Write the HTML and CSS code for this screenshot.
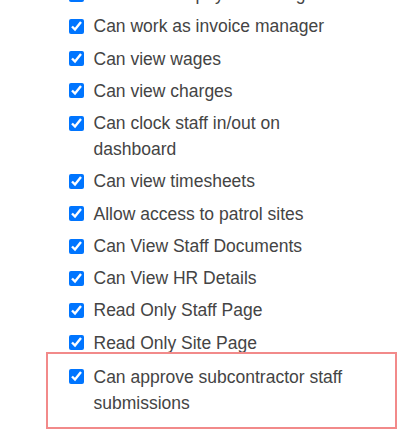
FILE: index.html
```html
<!DOCTYPE html>
<html lang="en">
<head>
<meta charset="utf-8">
<title>Permissions</title>
<link rel="stylesheet" href="styles.css">
</head>
<body>
<ul class="perm-list">
  <li class="perm"><input type="checkbox" class="perm-check" checked><span class="perm-text">Can work as payroll manager</span></li>
  <li class="perm"><input type="checkbox" class="perm-check" checked><span class="perm-text">Can work as invoice manager</span></li>
  <li class="perm"><input type="checkbox" class="perm-check" checked><span class="perm-text">Can view wages</span></li>
  <li class="perm"><input type="checkbox" class="perm-check" checked><span class="perm-text">Can view charges</span></li>
  <li class="perm"><input type="checkbox" class="perm-check" checked><span class="perm-text">Can clock staff in/out on dashboard</span></li>
  <li class="perm"><input type="checkbox" class="perm-check" checked><span class="perm-text">Can view timesheets</span></li>
  <li class="perm"><input type="checkbox" class="perm-check" checked><span class="perm-text">Allow access to patrol sites</span></li>
  <li class="perm"><input type="checkbox" class="perm-check" checked><span class="perm-text">Can View Staff Documents</span></li>
  <li class="perm"><input type="checkbox" class="perm-check" checked><span class="perm-text">Can View HR Details</span></li>
  <li class="perm"><input type="checkbox" class="perm-check" checked><span class="perm-text">Read Only Staff Page</span></li>
  <li class="perm"><input type="checkbox" class="perm-check" checked><span class="perm-text">Read Only Site Page</span></li>
  <li class="perm perm-highlight"><input type="checkbox" class="perm-check" checked><span class="perm-text">Can approve subcontractor staff submissions</span></li>
</ul>
</body>
</html>
```

FILE: styles.css
```css
html {
  margin: 0;
  padding: 0;
  background: #ffffff;
  overflow: hidden;
}

body {
  margin: 0;
  padding: 0;
  font-family: "Liberation Sans", Arial, sans-serif;
  font-size: 17.5px;
  color: #444444;
}

.perm-list {
  list-style: none;
  margin: -22.2px 0 0 0;
  padding: 0 0 20px 69px;
}

.perm {
  display: flex;
  align-items: flex-start;
  line-height: 26px;
  padding: 3.15px 0;
}

.perm-check {
  flex: none;
  width: 15px;
  height: 15px;
  margin: 5.6px 9.5px 0 0;
  accent-color: #0075ff;
}

.perm-text {
  max-width: 262px;
}

.perm-highlight {
  position: relative;
  margin-top: 1.7px;
}

.perm-highlight::after {
  content: "";
  position: absolute;
  left: -23px;
  top: -8.2px;
  width: 347px;
  height: 72.5px;
  border: 2px solid #f28a8a;
  pointer-events: none;
}
```
